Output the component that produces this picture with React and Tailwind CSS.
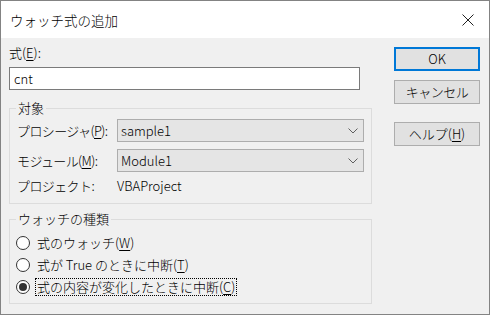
const U = ({ children }) => <span className="underline underline-offset-2">{children}</span>;

const Chevron = () => (
    <svg width="10" height="6" viewBox="0 0 10 6" className="text-[#606060]">
        <path d="M0.5 0.5 L5 5 L9.5 0.5" fill="none" stroke="currentColor" strokeWidth="1" />
    </svg>
);

const Combo = ({ value }) => (
    <div className="flex-1 h-[23px] bg-[#e5e5e5] border border-[#adadad] flex items-center justify-between pl-[3px] pr-[5px]">
        <span className="leading-[16px]">{value}</span>
        <Chevron />
    </div>
);

const Radio = ({ checked, children, focused }) => (
    <div className="h-[22px] flex items-center pl-[6px]">
        <span className="w-[14px] h-[14px] rounded-full border border-[#333] bg-white flex items-center justify-center shrink-0">
            {checked && <span className="w-[8px] h-[8px] rounded-full bg-[#333]" />}
        </span>
        <span className={`ml-[5px] leading-[16px] px-[1px] ${focused ? 'border border-dotted border-black' : 'border border-transparent'}`}>
            {children}
        </span>
    </div>
);

const Button = ({ children, primary, className = '' }) => (
    <div className={`w-[86px] h-[24px] bg-[#e1e1e1] flex items-center justify-center leading-[16px] ${primary ? 'border-2 border-[#0078d7]' : 'border border-[#adadad]'} ${className}`}>
        {children}
    </div>
);

export default function App() {
    return (
        <div className="w-[490px] h-[315px] border border-[#838383] bg-[#f0f0f0] flex flex-col text-[13px] font-light text-black font-['Noto_Sans_CJK_JP','Noto_Sans',sans-serif]">
            <div className="h-[37px] bg-white flex items-center justify-between pl-[9px] pr-[15px] shrink-0">
                <span className="text-[13.5px] leading-[18px]">ウォッチ式の追加</span>
                <svg width="12" height="12" viewBox="0 0 12 12">
                    <path d="M0.5 0.5 L11.5 11.5 M11.5 0.5 L0.5 11.5" stroke="#222" strokeWidth="1" />
                </svg>
            </div>

            <div className="flex">
                <div className="ml-[8px] w-[363px] flex flex-col">
                    <div className="mt-[7px] h-[16px] leading-[16px]">式(<U>E</U>):</div>
                    <div className="mt-[6px] w-[351px] h-[23px] bg-white border border-[#7a7a7a] flex items-center pl-[4px] leading-[16px]">cnt</div>

                    <div className="mt-[18px] h-[96px] relative border border-[#dcdcdc]">
                        <span className="absolute -top-[9px] left-[6px] px-[2px] bg-[#f0f0f0] leading-[16px]">対象</span>
                        <div className="mt-[10px] pl-[7px] pr-[7px] flex flex-col">
                            <div className="flex items-center">
                                <span className="w-[100px] leading-[16px] tracking-[-0.6px]">プロシージャ(<U>P</U>):</span>
                                <Combo value="sample1" />
                            </div>
                            <div className="flex items-center mt-[7px]">
                                <span className="w-[100px] leading-[16px] tracking-[-0.6px]">モジュール(<U>M</U>):</span>
                                <Combo value="Module1" />
                            </div>
                            <div className="flex items-center mt-[6px] h-[16px]">
                                <span className="w-[100px] leading-[16px] tracking-[-0.6px]">プロジェクト:</span>
                                <span className="leading-[16px]">VBAProject</span>
                            </div>
                        </div>
                    </div>

                    <div className="mt-[15px] h-[85px] relative border border-[#dcdcdc]">
                        <span className="absolute -top-[9px] left-[6px] px-[2px] bg-[#f0f0f0] leading-[16px]">ウォッチの種類</span>
                        <div className="pt-[12px] flex flex-col">
                            <Radio>式のウォッチ(<U>W</U>)</Radio>
                            <Radio>式が True のときに中断(<U>T</U>)</Radio>
                            <Radio checked focused>式の内容が変化したときに中断(<U>C</U>)</Radio>
                        </div>
                    </div>
                </div>

                <div className="ml-[22px] mt-[9px] flex flex-col">
                    <Button primary>OK</Button>
                    <Button className="mt-[9px] tracking-[-0.5px]">キャンセル</Button>
                    <Button className="mt-[18px]">ヘルプ(<U>H</U>)</Button>
                </div>
            </div>
        </div>
    );
}
